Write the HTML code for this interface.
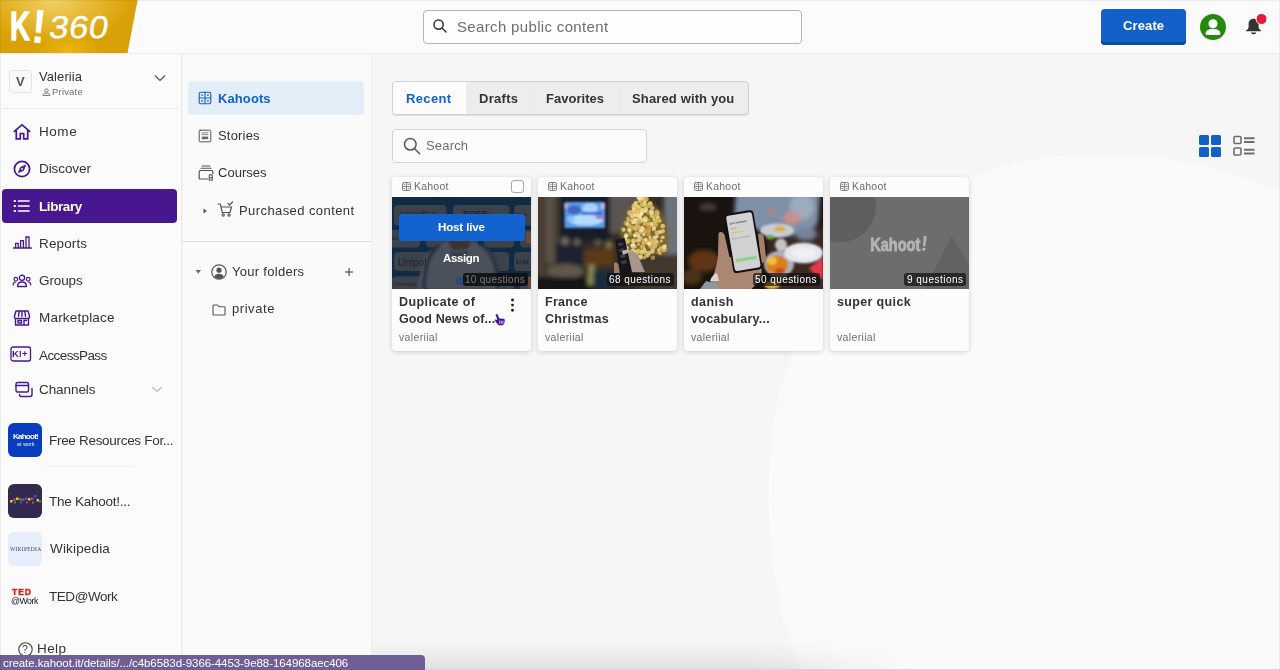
<!DOCTYPE html>
<html lang="en">
<head>
<meta charset="utf-8">
<title>Kahoot! Library</title>
<style>
*{box-sizing:border-box;margin:0;padding:0}
html,body{width:1280px;height:670px;overflow:hidden}
body{font-family:"Liberation Sans",Arial,sans-serif;background:#f6f6f6;color:#333;position:relative;font-size:13px}
.abs{position:absolute}
.z4{z-index:4}.z6{z-index:6}
.t{position:absolute;white-space:nowrap;z-index:4;will-change:transform}
#hdr{position:absolute;left:0;top:0;width:1280px;height:54px;background:#fbfbfb;border-bottom:1px solid #ebebeb;z-index:5}
#logo{position:absolute;left:0;top:0;width:138px;height:53px;z-index:6;background:radial-gradient(ellipse 34px 16px at 68px 50px,rgba(240,190,20,.75) 0%,rgba(240,190,20,0) 100%),radial-gradient(ellipse 78px 44px at 54px 0px,#f0d169 0%,#e8be3c 40%,#dca30a 95%,#d9a007 100%);clip-path:polygon(0 0,137.600px 0,127.500px 53px,0 53px)}
#logok{left:10px;top:6px;z-index:7;font-weight:bold;font-size:40px;color:#fff;transform:scaleX(.69);transform-origin:0 0;line-height:40px;-webkit-text-stroke:1.300px #fff}
#logox{left:30.500px;top:2.500px;z-index:7;font-weight:bold;font-size:48px;color:#fff;transform:scaleX(.9) rotate(6deg);transform-origin:50% 50%;line-height:48px}
#logon{left:47px;top:8.700px;z-index:7;font-size:31.500px;line-height:36px;color:#fff;letter-spacing:.4px;transform:skewX(-9deg) scaleX(1.100);transform-origin:0 100%;-webkit-text-stroke:.3px #fff}
#gsearch{position:absolute;left:423px;top:10px;width:379px;height:34px;border:1px solid #b4b4b4;border-radius:4px;background:#fdfdfd;z-index:6}
#create{position:absolute;left:1101px;top:9px;width:85px;height:35.500px;background:#1260c8;border-radius:4px;box-shadow:inset 0 -3px 0 #0c4aa0;z-index:6}
#sb{position:absolute;left:0;top:54px;width:182px;height:616px;background:#fbfbfb;border-right:1px solid #eaeaea;box-shadow:1px 0 0 #f4f4f4;z-index:3}
#sb2{position:absolute;left:182px;top:54px;width:190px;height:616px;background:#fafafa;border-right:1px solid #ededed;z-index:2}
.card{position:absolute;top:177px;width:138.600px;height:173.500px;background:#fcfcfc;border-radius:4px;box-shadow:0 1px 5px rgba(0,0,0,.17);z-index:1}
.img{position:absolute;top:197px;width:138.600px;height:92px;overflow:hidden;background:#666;z-index:1;will-change:transform}
#botgrad{position:absolute;left:372px;top:640px;width:540px;height:30px;z-index:0;background:linear-gradient(to bottom,rgba(0,0,0,0) 0%,rgba(0,0,0,.03) 45%,rgba(0,0,0,.085) 100%);-webkit-mask-image:linear-gradient(to right,#000 0%,#000 70%,transparent 100%);mask-image:linear-gradient(to right,#000 0%,#000 70%,transparent 100%)}
#botline{position:absolute;left:425px;top:669px;width:855px;height:1px;background:#d6d6d6;z-index:0}

</style>
</head>
<body>
<header>
<div id="hdr"></div>
<div id="logo"></div>
<span class="abs" id="logok">K</span><span class="abs" id="logox">!</span>
<span class="abs" id="logon">360</span>
<div id="gsearch"></div>
<svg class="abs z6" style="left:432px;top:18px" width="16" height="16" viewBox="0 0 16 16" fill="none" stroke="#333" stroke-width="1.5"><circle cx="6.6" cy="6.6" r="4.6"/><path d="M10 10l4 4" stroke-linecap="round"/></svg>
<span class="t" id="t0" style="left:457.33px;top:16.00px;font-size:15px;line-height:21px;font-weight:normal;color:#6e6e6e;letter-spacing:0.342px;z-index:6;">Search public content</span>
<div id="create"></div>
<span class="t" id="t1" style="left:1122.73px;top:16.90px;font-size:13px;line-height:18px;font-weight:bold;color:#fff;letter-spacing:0.120px;z-index:7;">Create</span>
<svg class="abs z6" style="left:1200px;top:13.700px" width="26" height="26" viewBox="0 0 26 26"><circle cx="13" cy="13" r="13" fill="#26890c"/><circle cx="13" cy="9.800" r="4.500" fill="#fff"/><path d="M5.6 19.6c0-3.4 3.3-4.6 7.4-4.6s7.4 1.2 7.4 4.6c0 .9-.5 1.4-1.4 1.4H7c-.9 0-1.4-.5-1.4-1.4z" fill="#fff"/></svg>
<svg class="abs z6" style="left:1243px;top:12px" width="26" height="26" viewBox="0 0 26 26"><path d="M10.600 6.800C7.500 6.800 5.600 9 5.600 12v3c0 1.500-1.100 2.500-2.400 3.400-.4.300-.2.900.3.900h14.200c.5 0 .7-.6.300-.9-1.300-.9-2.400-1.900-2.400-3.400v-3c0-3-1.900-5.200-5-5.200z" fill="#333"/><path d="M7.900 20.400h5.400c-.3 1.100-1.300 1.800-2.700 1.800s-2.400-.7-2.700-1.800z" fill="#333"/><circle cx="18.500" cy="7" r="5.500" fill="#e21b3c" stroke="#fbfbfb" stroke-width="1"/></svg>
</header>
<nav aria-label="Main navigation">
<div id="sb"></div><div id="sb2"></div>
<div class="abs" style="left:9px;top:70px;width:23px;height:23px;border:1px solid #e4e4e4;border-radius:4px;background:#fafafa;z-index:4"></div>
<span class="t" id="t2" style="left:15.80px;top:72.90px;font-size:13px;line-height:18px;font-weight:bold;color:#555;letter-spacing:0.000px;">V</span>
<span class="t" id="t3" style="left:39.20px;top:68.00px;font-size:13px;line-height:18px;font-weight:normal;color:#333;letter-spacing:0.086px;">Valeriia</span>
<svg class="abs z4" style="left:41.500px;top:87.500px" width="9" height="9" viewBox="0 0 9 9" fill="none" stroke="#6e6e6e" stroke-width=".9"><circle cx="4.500" cy="2.500" r="1.700"/><path d="M1 7.500c0-1.700 1.400-2.500 3.500-2.500s3.500.8 3.500 2.500z"/></svg>
<span class="t" id="t4" style="left:52.13px;top:85.00px;font-size:9.5px;line-height:13px;font-weight:normal;color:#6e6e6e;letter-spacing:0.189px;">Private</span>
<svg class="abs z4" style="left:153px;top:73px" width="14" height="10" viewBox="0 0 14 10" fill="none" stroke="#505050" stroke-width="1.150"><path d="M2 2.500l5 5 5-5"/></svg>
<div class="abs z4" style="left:2px;top:108px;width:176px;height:1px;background:#ebebeb"></div>
<div class="abs z4" style="left:2px;top:189px;width:175px;height:34px;background:#46178f;border-radius:4px"></div>
<svg class="abs" style="left:12px;top:121.6px;z-index:4" width="20" height="20" viewBox="0 0 20 20" fill="none" stroke="#46178f" stroke-width="1.5" stroke-linejoin="round" stroke-linecap="round"><path d="M2.300 9.300L10 2.800l7.700 6.500M4.300 8.300v8.500h4v-5.300h3.400v5.300h4V8.300" stroke-width="1.700" stroke-linejoin="miter"/></svg>
<span class="t" id="t5" style="left:38.70px;top:121.90px;font-size:13.5px;line-height:19px;font-weight:normal;color:#333;letter-spacing:0.556px;">Home</span>
<svg class="abs" style="left:12px;top:158.5px;z-index:4" width="20" height="20" viewBox="0 0 20 20" fill="none" stroke="#46178f" stroke-width="1.5" stroke-linejoin="round" stroke-linecap="round"><circle cx="10" cy="10" r="7.600" stroke-width="1.700"/><path d="M13.600 6.400l-2.100 5.100-5.100 2.100 2.100-5.100z" fill="#46178f" stroke-width=".8"/><circle cx="10" cy="10" r=".9" fill="#fcfcfc" stroke="none"/></svg>
<span class="t" id="t6" style="left:38.70px;top:159.20px;font-size:13.5px;line-height:19px;font-weight:normal;color:#333;letter-spacing:-0.081px;">Discover</span>
<svg class="abs" style="left:12px;top:196px;z-index:4" width="20" height="20" viewBox="0 0 20 20" fill="none" stroke="#fff" stroke-width="1.5" stroke-linejoin="round" stroke-linecap="round"><path d="M6.500 5h10.500M6.500 10h10.500M6.500 15h10.500" stroke-width="1.700"/><path d="M2.500 5h.6M2.500 10h.6M2.500 15h.6" stroke-width="1.900"/></svg>
<span class="t" id="t7" style="left:38.70px;top:196.50px;font-size:13.5px;line-height:19px;font-weight:bold;color:#fff;letter-spacing:-0.406px;">Library</span>
<svg class="abs" style="left:12px;top:232.2px;z-index:4" width="20" height="20" viewBox="0 0 20 20" fill="none" stroke="#46178f" stroke-width="1.5" stroke-linejoin="round" stroke-linecap="round"><path d="M1.500 16H19.300M3.600 16V11.400H6.200V16M8.600 16V8.600H11.400V16M14 16V5H17V16" stroke-width="1.300" stroke-linejoin="miter"/></svg>
<span class="t" id="t8" style="left:38.70px;top:234.10px;font-size:13.5px;line-height:19px;font-weight:normal;color:#333;letter-spacing:0.139px;">Reports</span>
<svg class="abs" style="left:12px;top:270.5px;z-index:4" width="20" height="20" viewBox="0 0 20 20" fill="none" stroke="#46178f" stroke-width="1.3" stroke-linejoin="round" stroke-linecap="round"><circle cx="10" cy="6.700" r="2.600"/><path d="M5.500 15.500c0-3 2-4.500 4.500-4.500s4.500 1.500 4.500 4.500z"/><circle cx="3.800" cy="8.200" r="1.800" stroke-width="1.200"/><circle cx="16.200" cy="8.200" r="1.800" stroke-width="1.200"/><path d="M1.200 14c0-1.800.9-3 2.600-3M18.800 14c0-1.800-.9-3-2.600-3" stroke-width="1.200"/></svg>
<span class="t" id="t9" style="left:39.03px;top:271.30px;font-size:13.5px;line-height:19px;font-weight:normal;color:#333;letter-spacing:-0.100px;">Groups</span>
<svg class="abs" style="left:12px;top:307.5px;z-index:4" width="20" height="20" viewBox="0 0 20 20" fill="none" stroke="#46178f" stroke-width="1.5" stroke-linejoin="round" stroke-linecap="round"><path d="M2.500 8l1.500-5h12l1.500 5v1.200c0 .8-.7 1.300-1.500 1.300H4c-.8 0-1.500-.5-1.500-1.300zM7.200 3.200l-.7 5M12.800 3.200l.7 5M10 3.200v5M3.500 10.500v6.500h13v-6.500M6 12.500h3.500v2.500H6zM12 17v-4.500h2.500" stroke-width="1.400"/></svg>
<span class="t" id="t10" style="left:38.70px;top:308.40px;font-size:13.5px;line-height:19px;font-weight:normal;color:#333;letter-spacing:0.200px;">Marketplace</span>
<svg class="abs" style="left:9.5px;top:346px;z-index:4" width="22" height="16" viewBox="0 0 22 16" fill="none" stroke="#46178f" stroke-width="1.5" stroke-linejoin="round" stroke-linecap="round"><rect x="1" y="1" width="19.500" height="14" rx="2" stroke-width="1.300"/></svg>
<span class="t" id="t11" style="left:12.33px;top:346.70px;font-size:9.5px;line-height:13px;font-weight:bold;color:#46178f;letter-spacing:0.000px;letter-spacing:0">K!+</span>
<span class="t" id="t12" style="left:39.00px;top:345.50px;font-size:13.5px;line-height:19px;font-weight:normal;color:#333;letter-spacing:-0.585px;">AccessPass</span>
<svg class="abs" style="left:13.7px;top:380px;z-index:4" width="20" height="18" viewBox="0 0 20 18" fill="none" stroke="#46178f" stroke-width="1.4" stroke-linejoin="round" stroke-linecap="round"><rect x="2" y="2.500" width="12.500" height="9.500" rx="1.500"/><path d="M2 5.500h12.500"/><path d="M5.500 14.500c0 1.500.7 2 2 2h8.500c1.300 0 2-.7 2-2V8.500" /></svg>
<span class="t" id="t13" style="left:39.03px;top:379.80px;font-size:13.5px;line-height:19px;font-weight:normal;color:#333;letter-spacing:-0.071px;">Channels</span>
<svg class="abs z4" style="left:150px;top:385px" width="14" height="9" viewBox="0 0 14 9" fill="none" stroke="#bdbdbd" stroke-width="1.200"><path d="M2 2l5 4.500 5-4.500"/></svg>
<div class="abs z4" style="left:8.200px;top:423px;width:34px;height:34px;border-radius:6px;background:#0a3cc0"></div>
<span class="t" id="t14" style="left:12.63px;top:431.00px;font-size:8px;line-height:11px;font-weight:bold;color:#fff;letter-spacing:-0.750px;z-index:5;">Kahoot!</span>
<span class="t" id="t15" style="left:16.67px;top:440.80px;font-size:5px;line-height:7px;font-weight:normal;color:#fff;letter-spacing:0.222px;z-index:5;">at work</span>
<span class="t" id="t16" style="left:49.00px;top:430.80px;font-size:13.5px;line-height:19px;font-weight:normal;color:#333;letter-spacing:-0.303px;">Free Resources For...</span>
<div class="abs z4" style="left:46px;top:466px;width:88px;height:1px;background:#f0f0f0"></div>
<div class="abs z4" style="left:8.200px;top:484px;width:34px;height:34px;border-radius:6px;background:#33284f"></div>
<svg class="abs" style="left:8.200px;top:484px;z-index:5" width="34" height="34" viewBox="0 0 34 34"><g>
<rect x="2" y="16" width="2.500" height="2.500" fill="#f0c030"/><rect x="5" y="14.500" width="2.500" height="2.500" fill="#e03050"/><rect x="8" y="13.500" width="2.500" height="2.500" fill="#f0c030"/><rect x="11" y="14" width="2.500" height="2.500" fill="#30a040"/><rect x="14" y="14.500" width="2.500" height="2.500" fill="#e03050"/><rect x="17" y="13.500" width="2.500" height="2.500" fill="#3060e0"/><rect x="20" y="14" width="2.500" height="2.500" fill="#f0c030"/><rect x="23" y="13.500" width="2.500" height="2.500" fill="#e03050"/><rect x="26" y="11" width="2.500" height="2.500" fill="#3060e0"/><rect x="28.500" y="15" width="2.500" height="2.500" fill="#f0c030"/><rect x="31" y="16.500" width="2" height="2" fill="#30a040"/>
<rect x="6" y="17.500" width="2" height="2" fill="#30a040"/><rect x="12" y="17.500" width="2" height="2" fill="#3060e0"/><rect x="18" y="17.500" width="2" height="2" fill="#e03050"/><rect x="24" y="17.500" width="2" height="2" fill="#30a040"/></g></svg>
<span class="t" id="t17" style="left:49.17px;top:491.50px;font-size:13.5px;line-height:19px;font-weight:normal;color:#333;letter-spacing:-0.256px;">The Kahoot!...</span>
<div class="abs z4" style="left:8.200px;top:531.500px;width:34px;height:34px;border-radius:6px;background:#e6eefa"></div>
<span class="t" id="t18" style="left:10.00px;top:544.60px;font-size:5.6px;line-height:8px;font-weight:normal;color:#3a4a66;letter-spacing:0.208px;font-family:'Liberation Serif',serif;z-index:5;">WIKIPEDIA</span>
<span class="t" id="t19" style="left:49.50px;top:539.30px;font-size:13.5px;line-height:19px;font-weight:normal;color:#333;letter-spacing:0.167px;">Wikipedia</span>
<span class="t" id="t20" style="left:11.50px;top:586.20px;font-size:8.5px;line-height:12px;font-weight:bold;color:#e2231a;letter-spacing:1.000px;-webkit-text-stroke:.4px #e2231a;">TED</span>
<span class="t" id="t21" style="left:10.83px;top:595.20px;font-size:8.8px;line-height:12px;font-weight:normal;color:#111;letter-spacing:0.000px;letter-spacing:-.5px">@Work</span>
<span class="t" id="t22" style="left:49.17px;top:586.70px;font-size:13.5px;line-height:19px;font-weight:normal;color:#333;letter-spacing:-0.452px;">TED@Work</span>
<svg class="abs z4" style="left:18px;top:641.500px" width="15" height="15" viewBox="0 0 15 15" fill="none" stroke="#444" stroke-width="1.100"><circle cx="7.500" cy="7.500" r="6.700"/></svg>
<span class="t" id="t23" style="left:22.47px;top:641.70px;font-size:10.5px;line-height:15px;font-weight:normal;color:#444;letter-spacing:0.000px;">?</span>
<span class="t" id="t24" style="left:36.80px;top:639.10px;font-size:13.5px;line-height:19px;font-weight:normal;color:#333;letter-spacing:0.389px;">Help</span>
</nav>
<aside aria-label="Library sections">
<div class="abs z4" style="left:188px;top:81px;width:176px;height:34px;background:#e4eef8;border-radius:4px"></div>
<svg class="abs" style="left:198px;top:91.3px;z-index:4" width="14" height="14" viewBox="0 0 14 14" fill="none" stroke="#1260c8" stroke-width="1.5" stroke-linejoin="round" stroke-linecap="round"><rect x="1.200" y="1.200" width="11.600" height="11.600" rx="1.500" stroke-width="1.100"/><path d="M7 1.200v11.600M1.200 7h11.600" stroke-width="1.100"/><path d="M3.600 4.100h1M9.400 4.100h1M3.600 9.900h1M9.400 9.900h1" stroke-width="1.200"/></svg>
<span class="t" id="t25" style="left:218.00px;top:90.10px;font-size:13px;line-height:18px;font-weight:bold;color:#1260c8;letter-spacing:0.100px;">Kahoots</span>
<svg class="abs" style="left:198px;top:128.5px;z-index:4" width="14" height="14" viewBox="0 0 14 14" fill="none" stroke="#555" stroke-width="1.5" stroke-linejoin="round" stroke-linecap="round"><rect x="1.200" y="1.200" width="11.600" height="11.600" rx="1" stroke-width="1"/><path d="M3.600 3.800h6.800M3.600 5.600h6.800" stroke-width=".7" stroke-linecap="butt"/><rect x="3.800" y="7.600" width="6.400" height="2.600" fill="#666" stroke="none"/></svg>
<span class="t" id="t26" style="left:218.33px;top:126.60px;font-size:13px;line-height:18px;font-weight:normal;color:#333;letter-spacing:0.189px;">Stories</span>
<svg class="abs" style="left:197.5px;top:164.5px;z-index:4" width="16" height="17" viewBox="0 0 16 17" fill="none" stroke="#555" stroke-width="1.5" stroke-linejoin="round" stroke-linecap="round"><path d="M4 1h8M3 3.200h10" stroke-width="1.100"/><path d="M10 14H2.200c-.6 0-1-.4-1-1V6.500c0-.6.4-1 1-1h11.600c.6 0 1 .4 1 1v2" stroke-width="1.200"/><circle cx="12.800" cy="11.300" r="1.700" stroke-width="1.100"/><path d="M11.300 12.500v3.200l1.500-1 1.500 1v-3.200" stroke-width="1"/></svg>
<span class="t" id="t27" style="left:218.33px;top:164.10px;font-size:13px;line-height:18px;font-weight:normal;color:#333;letter-spacing:0.033px;">Courses</span>
<svg class="abs z4" style="left:203px;top:207.500px" width="5" height="6" viewBox="0 0 5 6"><path d="M.5.500l3.500 2.500-3.500 2.500z" fill="#555"/></svg>
<svg class="abs" style="left:216.5px;top:201px;z-index:4" width="18" height="17" viewBox="0 0 18 17" fill="none" stroke="#555" stroke-width="1.5" stroke-linejoin="round" stroke-linecap="round"><path d="M1 3h2.300l2 8.500h7.700l1.500-5.500H4.200" stroke-width="1.200"/><circle cx="6.200" cy="14" r="1.100" stroke-width="1.100"/><circle cx="12" cy="14" r="1.100" stroke-width="1.100"/><path d="M11 2.500l1.500 1.500 3-3" stroke-width="1.200"/></svg>
<span class="t" id="t28" style="left:238.70px;top:201.60px;font-size:13px;line-height:18px;font-weight:normal;color:#333;letter-spacing:0.417px;">Purchased content</span>
<div class="abs z4" style="left:182px;top:241px;width:189px;height:1px;background:#dedede"></div>
<svg class="abs z4" style="left:195px;top:269px" width="7" height="6" viewBox="0 0 7 6"><path d="M.500 1h5.500L3.250 4.800z" fill="#6a6a6a"/></svg>
<svg class="abs z4" style="left:210.500px;top:263.500px" width="16" height="16" viewBox="0 0 16 16"><circle cx="8" cy="8" r="7.200" fill="none" stroke="#555" stroke-width="1.200"/><circle cx="8" cy="6.200" r="2.600" fill="#555"/><path d="M3.300 12.700c.6-2 2.400-2.900 4.700-2.900s4.100.9 4.700 2.900c-1.200 1.400-2.900 2.200-4.700 2.200s-3.500-.8-4.700-2.200z" fill="#555"/></svg>
<span class="t" id="t29" style="left:232.47px;top:263.00px;font-size:13px;line-height:18px;font-weight:normal;color:#333;letter-spacing:0.288px;">Your folders</span>
<svg class="abs z4" style="left:344.500px;top:267.500px" width="8" height="8" viewBox="0 0 8 8" stroke="#333" stroke-width="1"><path d="M4 0v8M0 4h8"/></svg>
<svg class="abs" style="left:211.5px;top:302.5px;z-index:4" width="14" height="13" viewBox="0 0 14 13" fill="none" stroke="#555" stroke-width="1.5" stroke-linejoin="round" stroke-linecap="round"><path d="M1 3c0-.6.400-1 1-1h3.500l1.500 1.700h5c.6 0 1 .4 1 1v6.300c0 .6-.4 1-1 1H2c-.6 0-1-.4-1-1z" stroke-width="1.100"/></svg>
<span class="t" id="t30" style="left:232.13px;top:300.00px;font-size:13px;line-height:18px;font-weight:normal;color:#333;letter-spacing:0.556px;">private</span>
</aside>
<main>
<svg id="wave" class="abs" style="left:372px;top:54px;z-index:0" width="908" height="616" viewBox="372 54 908 616"><path d="M802 670C774 610 760 520 774 420C792 305 882 205 990 170C1075 145 1185 150 1280 192V670z" fill="#fafafa"/></svg><div id="botgrad"></div><div id="botline"></div>
<div class="abs" style="left:392px;top:81px;width:357px;height:34px;border:1px solid #d2d2d2;border-radius:4px;background:#ededed;box-shadow:0 1px 0 #dedede"></div>
<div class="abs" style="left:393px;top:82px;width:73px;height:32px;background:#fcfcfc;border-radius:3px 0 0 3px"></div>
<div class="abs" style="left:533px;top:88px;width:1px;height:20px;background:#e6e6e6"></div>
<div class="abs" style="left:618.500px;top:88px;width:1px;height:20px;background:#e6e6e6"></div>
<span class="t" id="t31" style="left:406.30px;top:90.30px;font-size:13px;line-height:18px;font-weight:bold;color:#1260c8;letter-spacing:0.347px;">Recent</span>
<span class="t" id="t32" style="left:479.20px;top:90.30px;font-size:13px;line-height:18px;font-weight:bold;color:#333;letter-spacing:0.293px;">Drafts</span>
<span class="t" id="t33" style="left:546.00px;top:90.30px;font-size:13px;line-height:18px;font-weight:bold;color:#333;letter-spacing:0.025px;">Favorites</span>
<span class="t" id="t34" style="left:631.87px;top:90.30px;font-size:13px;line-height:18px;font-weight:bold;color:#333;letter-spacing:0.136px;">Shared with you</span>
<div class="abs" style="left:392px;top:129px;width:254.500px;height:34px;border:1px solid #d4d4d4;border-radius:4px;background:#fbfbfb"></div>
<svg class="abs" style="left:402px;top:136px" width="20" height="20" viewBox="0 0 20 20" fill="none" stroke="#555" stroke-width="1.500"><circle cx="8.300" cy="8.300" r="5.800"/><path d="M12.700 12.700l5 5" stroke-linecap="round"/></svg>
<span class="t" id="t35" style="left:426.13px;top:137.00px;font-size:13px;line-height:18px;font-weight:normal;color:#6e6e6e;letter-spacing:0.167px;">Search</span>
<svg class="abs" style="left:1199px;top:135px" width="22" height="22" viewBox="0 0 22 22" fill="#1260c8"><rect x="0" y="0" width="10" height="10" rx="1.500"/><rect x="12" y="0" width="10" height="10" rx="1.500"/><rect x="0" y="12" width="10" height="10" rx="1.500"/><rect x="12" y="12" width="10" height="10" rx="1.500"/></svg>
<svg class="abs" style="left:1233px;top:135px" width="22" height="22" viewBox="0 0 22 22" fill="none" stroke="#6e6e6e" stroke-width="1.600"><rect x="1" y="1.500" width="7" height="7" rx="1"/><rect x="1" y="13" width="7" height="7" rx="1"/><path d="M11 3.300h10.500M11 6.900h10.500M11 14.800h10.500M11 18.400h10.500" stroke-width="2"/></svg>
<div class="card" style="left:392px"></div>
<svg class="abs" style="left:401.5px;top:182px;z-index:4" width="9" height="9" viewBox="0 0 9 9" fill="none" stroke="#6e6e6e" stroke-width="1.5" stroke-linejoin="round" stroke-linecap="round"><rect x=".6" y=".6" width="7.800" height="7.800" rx="1" stroke-width=".9"/><path d="M4.500.6v7.800M.6 4.500h7.800" stroke-width=".8"/><path d="M2.100 2.600h.9M6 2.600h.9M2.100 6.400h.9M6 6.400h.9" stroke-width=".8"/></svg>
<span class="t" id="t36" style="left:413.63px;top:178.90px;font-size:10.5px;line-height:15px;font-weight:normal;color:#6e6e6e;letter-spacing:0.220px;">Kahoot</span>
<div class="img" id="img0" style="left:392px"><svg width="139" height="92" viewBox="0 0 139 92" style="display:block" preserveAspectRatio="none"><defs><filter id="b1" x="-10%" y="-10%" width="120%" height="120%"><feGaussianBlur stdDeviation="0.800"/></filter></defs><rect width="139" height="92" fill="#122b45"/><rect x="2" y="8" width="52.5" height="20.5" rx="4" fill="#3c424c"/><rect x="61" y="8" width="56.5" height="20.5" rx="4" fill="#3c424c"/><rect x="122" y="8" width="20" height="20.5" rx="4" fill="#3c424c"/><rect x="-6" y="33" width="34" height="17.5" rx="4" fill="#3c424c"/><rect x="34" y="33" width="52" height="17.5" rx="4" fill="#3c424c"/><rect x="92" y="33" width="30" height="17.5" rx="4" fill="#3c424c"/><rect x="128" y="33" width="14" height="17.5" rx="4" fill="#3c424c"/><rect x="2" y="55" width="36" height="19" rx="4" fill="#3c424c"/><rect x="61" y="55" width="56" height="19" rx="4" fill="#3c424c"/><rect x="122" y="55" width="20" height="19" rx="4" fill="#3c424c"/><rect x="0" y="79.5" width="32" height="14" rx="4" fill="#3c424c"/><rect x="36" y="79.5" width="50" height="14" rx="4" fill="#3c424c"/><rect x="92" y="79.5" width="30" height="14" rx="4" fill="#3c424c"/><rect x="128" y="79.5" width="14" height="14" rx="4" fill="#3c424c"/><g filter="url(#b1)"><path d="M52 46c8-3 22-3 31 0l14 8c6 4 10 18 12 38H26c2-20 6-34 12-38z" fill="#4b515a"/><path d="M32 92c0-22 6-38 16-44M106 92c0-22-6-38-16-44" fill="none" stroke="#2b3442" stroke-width="4"/><ellipse cx="67.500" cy="46" rx="11" ry="7.500" fill="#3a3230"/><path d="M58 52c4 5 15 5 19 0l-3 8H61z" fill="#2d3a4c"/></g><text x="8" y="19.500" font-size="8.500" font-family="Liberation Sans,Arial,sans-serif" fill="#20242e">UnipolSai</text><text x="71" y="19.500" font-size="9" font-weight="bold" font-family="Liberation Sans,Arial,sans-serif" fill="#20242e">BPER:</text><text x="124.500" y="19.500" font-size="5" font-family="Liberation Sans,Arial,sans-serif" fill="#20242e">EUR</text><text x="6" y="69" font-size="10" font-family="Liberation Sans,Arial,sans-serif" fill="#20242e">Unipol</text><text x="124" y="67" font-size="6" font-weight="bold" font-family="Liberation Sans,Arial,sans-serif" fill="#20242e">EUR</text><text x="1" y="89" font-size="5.500" font-family="Liberation Sans,Arial,sans-serif" fill="#20242e">Grenston</text><text x="0" y="43" font-size="5" font-family="Liberation Sans,Arial,sans-serif" fill="#20242e">bo</text><rect x="64" y="80" width="8" height="8" fill="#2c4a78"/><rect x="134" y="35" width="5" height="11" fill="#6a4a3a"/><rect x="136" y="80" width="3" height="12" fill="#6a4a3a"/></svg></div>
<span class="t" id="t37" style="left:398.73px;top:292.80px;font-size:12.5px;line-height:18px;font-weight:bold;color:#333;letter-spacing:0.409px;">Duplicate of</span>
<span class="t" id="t38" style="left:398.87px;top:309.60px;font-size:12.5px;line-height:18px;font-weight:bold;color:#333;letter-spacing:0.119px;">Good News of...</span>
<span class="t" id="t39" style="left:399.20px;top:329.90px;font-size:10.5px;line-height:15px;font-weight:normal;color:#6e6e6e;letter-spacing:0.342px;">valeriial</span>
<div class="abs" style="left:462.5px;top:273px;width:65.0px;height:13px;border-radius:3px;background:rgba(14,14,14,0.9);z-index:2"></div>
<span class="t" id="t40" style="left:465.03px;top:272.60px;font-size:10px;line-height:14px;font-weight:normal;color:#787c83;letter-spacing:0.279px;z-index:3;">10 questions</span>
<div class="card" style="left:538px"></div>
<svg class="abs" style="left:547.5px;top:182px;z-index:4" width="9" height="9" viewBox="0 0 9 9" fill="none" stroke="#6e6e6e" stroke-width="1.5" stroke-linejoin="round" stroke-linecap="round"><rect x=".6" y=".6" width="7.800" height="7.800" rx="1" stroke-width=".9"/><path d="M4.500.6v7.800M.6 4.500h7.800" stroke-width=".8"/><path d="M2.100 2.600h.9M6 2.600h.9M2.100 6.400h.9M6 6.400h.9" stroke-width=".8"/></svg>
<span class="t" id="t41" style="left:559.63px;top:178.90px;font-size:10.5px;line-height:15px;font-weight:normal;color:#6e6e6e;letter-spacing:0.220px;">Kahoot</span>
<div class="img" id="img1" style="left:538px"><svg width="139" height="92" viewBox="0 0 139 92" style="display:block" preserveAspectRatio="none"><defs><filter id="b2" x="-10%" y="-10%" width="120%" height="120%"><feGaussianBlur stdDeviation="2.200"/></filter><filter id="b2s" x="-10%" y="-10%" width="120%" height="120%"><feGaussianBlur stdDeviation="0.700"/></filter><filter id="b2t" x="-20%" y="-20%" width="140%" height="140%"><feGaussianBlur stdDeviation="2"/></filter><filter id="b2m" x="-10%" y="-10%" width="120%" height="120%"><feGaussianBlur stdDeviation="1.100"/></filter><filter id="b2c" x="-10%" y="-10%" width="120%" height="120%"><feGaussianBlur stdDeviation="0.450"/></filter><filter id="b2h" x="-10%" y="-10%" width="120%" height="120%"><feGaussianBlur stdDeviation="0.500"/></filter></defs><rect width="139" height="92" fill="#332c26"/><g filter="url(#b2)"><rect x="-4" y="-4" width="25" height="100" fill="#463d33"/><rect x="8" y="-4" width="8" height="70" fill="#5a5146"/><rect x="72" y="-4" width="30" height="40" fill="#5a5552"/><rect x="126" y="-4" width="18" height="62" fill="#6d737c"/><rect x="22" y="-4" width="50" height="48" fill="#171e2c"/><rect x="18" y="47" width="30" height="22" fill="#1c222e"/><rect x="46" y="52" width="30" height="17" fill="#5a3a12"/><ellipse cx="28" cy="74" rx="18" ry="7" fill="#5e594c"/><rect x="-4" y="80" width="60" height="16" fill="#191513"/><rect x="98" y="60" width="45" height="36" fill="#43382f"/><rect x="50" y="68" width="7" height="20" fill="#8c8c52"/><rect x="55" y="74" width="22" height="22" fill="#1b2a40"/><circle cx="27" cy="44" r="3.500" fill="#7a7468"/><circle cx="39" cy="45" r="3" fill="#6e6a66"/><circle cx="60" cy="46" r="3" fill="#6a6250"/><circle cx="71" cy="48" r="3.500" fill="#8a7a4a"/></g><g filter="url(#b2m)"><rect x="26.500" y="5" width="40.500" height="26" rx="1.500" fill="#5a9ce6"/><ellipse cx="48" cy="23" rx="17" ry="5.500" fill="#b4dcff"/><ellipse cx="52" cy="11" rx="8" ry="5" fill="#a8d2fb"/><ellipse cx="36" cy="13" rx="7" ry="4.500" fill="#3f66c4"/><rect x="44" y="15" width="20" height="3" fill="#3a6ad0"/><ellipse cx="33" cy="22" rx="4" ry="3" fill="#8fc0f4"/><rect x="58" y="19" width="9" height="3" fill="#b070c0"/><ellipse cx="28" cy="9" rx="2" ry="3" fill="#c8a0c8"/><ellipse cx="65" cy="9" rx="2" ry="3" fill="#d8b8d0"/></g><g filter="url(#b2t)"><path d="M104 -2L124 16 131 38 128 58H92L82 36 90 14z" fill="#7d6830"/></g><g filter="url(#b2c)"><circle cx="94.4" cy="19.1" r="2.2" fill="#f3e09a" opacity="0.89"/><circle cx="105.9" cy="4.8" r="2.4" fill="#d6b254" opacity="0.61"/><circle cx="89.6" cy="25.9" r="1.6" fill="#ecd488" opacity="0.62"/><circle cx="124.9" cy="34.1" r="2.1" fill="#e9cf7c" opacity="0.80"/><circle cx="122.3" cy="23.6" r="1.5" fill="#dcbc60" opacity="0.70"/><circle cx="97.6" cy="7.9" r="1.8" fill="#dcbc60" opacity="0.64"/><circle cx="91.9" cy="34.4" r="1.6" fill="#f3e09a" opacity="0.80"/><circle cx="105.7" cy="37.4" r="2.0" fill="#e3c56c" opacity="0.76"/><circle cx="103.7" cy="56.3" r="1.7" fill="#dcbc60" opacity="0.84"/><circle cx="107.6" cy="14.1" r="2.0" fill="#e3c56c" opacity="0.86"/><circle cx="120.0" cy="16.9" r="1.6" fill="#ecd488" opacity="0.66"/><circle cx="119.7" cy="20.2" r="1.9" fill="#f3e09a" opacity="0.87"/><circle cx="121.9" cy="34.5" r="1.8" fill="#e3c56c" opacity="0.81"/><circle cx="103.6" cy="35.0" r="2.3" fill="#fbefba" opacity="0.77"/><circle cx="87.6" cy="40.2" r="2.2" fill="#caa548" opacity="0.70"/><circle cx="111.4" cy="22.9" r="1.5" fill="#caa548" opacity="0.72"/><circle cx="105.5" cy="36.9" r="1.7" fill="#fbefba" opacity="0.65"/><circle cx="102.4" cy="14.4" r="2.4" fill="#f3e09a" opacity="0.66"/><circle cx="97.6" cy="23.9" r="1.6" fill="#ecd488" opacity="0.90"/><circle cx="103.0" cy="16.3" r="1.9" fill="#ecd488" opacity="0.94"/><circle cx="98.5" cy="8.4" r="1.7" fill="#d6b254" opacity="0.60"/><circle cx="95.3" cy="50.5" r="1.8" fill="#dcbc60" opacity="0.75"/><circle cx="107.8" cy="21.9" r="2.5" fill="#e9cf7c" opacity="0.76"/><circle cx="125.6" cy="53.0" r="2.2" fill="#ecd488" opacity="0.74"/><circle cx="104.8" cy="23.4" r="1.9" fill="#d6b254" opacity="0.62"/><circle cx="96.9" cy="11.9" r="1.8" fill="#e9cf7c" opacity="0.64"/><circle cx="107.1" cy="34.1" r="2.4" fill="#e9cf7c" opacity="0.62"/><circle cx="102.2" cy="11.9" r="2.1" fill="#e3c56c" opacity="0.81"/><circle cx="90.5" cy="28.4" r="2.0" fill="#caa548" opacity="0.77"/><circle cx="94.4" cy="18.3" r="2.2" fill="#fbefba" opacity="0.77"/><circle cx="107.2" cy="41.9" r="1.7" fill="#e3c56c" opacity="0.65"/><circle cx="85.5" cy="32.7" r="2.0" fill="#f3e09a" opacity="0.84"/><circle cx="101.6" cy="15.2" r="1.7" fill="#d6b254" opacity="0.79"/><circle cx="100.5" cy="47.3" r="1.7" fill="#d6b254" opacity="0.88"/><circle cx="117.2" cy="49.7" r="1.7" fill="#caa548" opacity="0.72"/><circle cx="100.0" cy="0.8" r="1.8" fill="#fbefba" opacity="0.67"/><circle cx="98.9" cy="36.5" r="2.3" fill="#e3c56c" opacity="0.93"/><circle cx="96.1" cy="21.6" r="1.7" fill="#d6b254" opacity="0.72"/><circle cx="124.6" cy="28.9" r="2.1" fill="#e9cf7c" opacity="0.77"/><circle cx="119.0" cy="39.5" r="1.6" fill="#f3e09a" opacity="0.92"/><circle cx="117.4" cy="47.5" r="2.0" fill="#dcbc60" opacity="0.75"/><circle cx="88.3" cy="38.4" r="2.4" fill="#ecd488" opacity="0.76"/><circle cx="90.0" cy="45.1" r="1.7" fill="#dcbc60" opacity="0.61"/><circle cx="104.1" cy="35.6" r="2.2" fill="#caa548" opacity="0.83"/><circle cx="107.1" cy="20.7" r="1.6" fill="#e9cf7c" opacity="0.88"/><circle cx="90.5" cy="44.0" r="2.2" fill="#dcbc60" opacity="0.75"/><circle cx="120.8" cy="53.0" r="1.7" fill="#fbefba" opacity="0.67"/><circle cx="116.1" cy="30.1" r="1.8" fill="#ecd488" opacity="0.89"/><circle cx="107.3" cy="2.8" r="2.4" fill="#ecd488" opacity="0.89"/><circle cx="94.1" cy="53.4" r="1.7" fill="#e9cf7c" opacity="0.91"/><circle cx="111.7" cy="47.1" r="2.3" fill="#dcbc60" opacity="0.66"/><circle cx="114.3" cy="28.4" r="2.1" fill="#e3c56c" opacity="0.84"/><circle cx="104.8" cy="31.9" r="2.3" fill="#e9cf7c" opacity="0.69"/><circle cx="113.6" cy="16.2" r="2.0" fill="#e9cf7c" opacity="0.87"/><circle cx="106.5" cy="55.6" r="2.1" fill="#d6b254" opacity="0.84"/><circle cx="106.8" cy="27.0" r="2.0" fill="#d6b254" opacity="0.84"/><circle cx="125.3" cy="53.3" r="1.8" fill="#d6b254" opacity="0.89"/><circle cx="97.8" cy="7.5" r="1.9" fill="#f3e09a" opacity="0.83"/><circle cx="94.9" cy="25.6" r="1.8" fill="#f3e09a" opacity="0.91"/><circle cx="109.4" cy="8.6" r="2.2" fill="#dcbc60" opacity="0.69"/><circle cx="104.3" cy="7.5" r="2.2" fill="#f3e09a" opacity="0.74"/><circle cx="124.9" cy="29.2" r="2.3" fill="#dcbc60" opacity="0.85"/><circle cx="106.4" cy="60.6" r="1.9" fill="#e3c56c" opacity="0.71"/><circle cx="86.9" cy="43.8" r="2.1" fill="#caa548" opacity="0.85"/><circle cx="106.1" cy="22.8" r="1.8" fill="#f3e09a" opacity="0.64"/><circle cx="98.8" cy="55.9" r="2.4" fill="#f3e09a" opacity="0.69"/><circle cx="107.1" cy="1.5" r="1.8" fill="#dcbc60" opacity="0.89"/><circle cx="114.9" cy="51.7" r="2.4" fill="#ecd488" opacity="0.65"/><circle cx="111.1" cy="56.0" r="2.2" fill="#f3e09a" opacity="0.70"/><circle cx="94.9" cy="48.6" r="2.4" fill="#fbefba" opacity="0.93"/><circle cx="119.0" cy="38.3" r="1.6" fill="#d6b254" opacity="0.62"/><circle cx="106.3" cy="52.5" r="1.8" fill="#ecd488" opacity="0.92"/><circle cx="94.7" cy="15.6" r="2.0" fill="#d6b254" opacity="0.93"/><circle cx="101.8" cy="59.1" r="1.7" fill="#fbefba" opacity="0.82"/><circle cx="93.2" cy="31.9" r="1.9" fill="#dcbc60" opacity="0.69"/><circle cx="127.3" cy="48.8" r="1.5" fill="#e9cf7c" opacity="0.86"/><circle cx="92.3" cy="33.2" r="2.0" fill="#caa548" opacity="0.64"/><circle cx="105.0" cy="49.8" r="2.0" fill="#ecd488" opacity="0.94"/><circle cx="96.6" cy="18.1" r="1.7" fill="#d6b254" opacity="0.89"/><circle cx="112.3" cy="42.8" r="1.9" fill="#e3c56c" opacity="0.94"/><circle cx="88.8" cy="50.9" r="2.1" fill="#fbefba" opacity="0.75"/><circle cx="106.3" cy="2.4" r="1.9" fill="#fbefba" opacity="0.81"/><circle cx="87.5" cy="41.9" r="1.7" fill="#fbefba" opacity="0.76"/><circle cx="118.9" cy="15.3" r="2.5" fill="#e3c56c" opacity="0.69"/><circle cx="103.1" cy="58.9" r="1.9" fill="#e9cf7c" opacity="0.72"/><circle cx="101.5" cy="4.2" r="2.2" fill="#d6b254" opacity="0.78"/><circle cx="102.5" cy="-0.7" r="1.6" fill="#ecd488" opacity="0.81"/><circle cx="98.5" cy="23.4" r="2.1" fill="#f3e09a" opacity="0.80"/><circle cx="115.9" cy="31.8" r="2.2" fill="#ecd488" opacity="0.87"/><circle cx="106.6" cy="43.7" r="1.8" fill="#dcbc60" opacity="0.62"/><circle cx="123.3" cy="50.8" r="2.1" fill="#dcbc60" opacity="0.92"/><circle cx="109.9" cy="45.7" r="2.3" fill="#e9cf7c" opacity="0.89"/><circle cx="122.8" cy="35.2" r="2.2" fill="#d6b254" opacity="0.63"/><circle cx="105.7" cy="1.6" r="2.5" fill="#ecd488" opacity="0.89"/><circle cx="111.0" cy="33.6" r="2.1" fill="#d6b254" opacity="0.77"/><circle cx="106.1" cy="-0.8" r="2.2" fill="#f3e09a" opacity="0.83"/><circle cx="107.4" cy="3.1" r="1.8" fill="#f3e09a" opacity="0.90"/><circle cx="112.5" cy="13.6" r="1.7" fill="#caa548" opacity="0.77"/><circle cx="104.8" cy="22.7" r="2.2" fill="#e9cf7c" opacity="0.82"/><circle cx="88.0" cy="38.9" r="1.6" fill="#fbefba" opacity="0.83"/><circle cx="111.6" cy="42.0" r="1.6" fill="#caa548" opacity="0.62"/><circle cx="110.5" cy="15.7" r="2.2" fill="#caa548" opacity="0.70"/><circle cx="104.1" cy="31.0" r="2.0" fill="#f3e09a" opacity="0.95"/><circle cx="97.5" cy="33.0" r="1.6" fill="#caa548" opacity="0.61"/><circle cx="117.7" cy="27.5" r="2.5" fill="#caa548" opacity="0.95"/><circle cx="120.0" cy="23.0" r="2.4" fill="#f3e09a" opacity="0.80"/><circle cx="105.4" cy="7.8" r="2.5" fill="#dcbc60" opacity="0.81"/><circle cx="96.5" cy="38.2" r="1.6" fill="#e3c56c" opacity="0.68"/><circle cx="107.9" cy="54.7" r="1.5" fill="#e9cf7c" opacity="0.93"/><circle cx="102.5" cy="41.3" r="2.2" fill="#ecd488" opacity="0.72"/><circle cx="116.2" cy="18.6" r="1.5" fill="#e3c56c" opacity="0.89"/><circle cx="112.1" cy="6.4" r="2.2" fill="#fbefba" opacity="0.69"/><circle cx="103.1" cy="3.0" r="2.4" fill="#f3e09a" opacity="0.73"/><circle cx="97.2" cy="25.5" r="1.5" fill="#f3e09a" opacity="0.62"/><circle cx="112.0" cy="40.0" r="1.6" fill="#fbefba" opacity="0.75"/><circle cx="114.1" cy="18.6" r="2.3" fill="#ecd488" opacity="0.91"/><circle cx="112.8" cy="49.3" r="2.4" fill="#d6b254" opacity="0.85"/><circle cx="106.9" cy="2.1" r="2.0" fill="#dcbc60" opacity="0.83"/><circle cx="91.9" cy="16.7" r="2.4" fill="#dcbc60" opacity="0.66"/><circle cx="97.6" cy="24.7" r="1.8" fill="#fbefba" opacity="0.74"/><circle cx="105.0" cy="13.8" r="2.2" fill="#f3e09a" opacity="0.66"/><circle cx="98.9" cy="9.0" r="2.4" fill="#caa548" opacity="0.79"/><circle cx="99.2" cy="27.1" r="2.3" fill="#ecd488" opacity="0.65"/><circle cx="95.6" cy="10.9" r="1.8" fill="#f3e09a" opacity="0.71"/><circle cx="116.0" cy="21.8" r="1.7" fill="#e9cf7c" opacity="0.86"/><circle cx="102.4" cy="24.6" r="2.0" fill="#ecd488" opacity="0.69"/><circle cx="107.0" cy="45.6" r="2.1" fill="#e3c56c" opacity="0.64"/><circle cx="110.7" cy="30.2" r="2.4" fill="#d6b254" opacity="0.63"/><circle cx="104.0" cy="54.6" r="2.1" fill="#ecd488" opacity="0.93"/><circle cx="122.5" cy="51.6" r="1.5" fill="#e9cf7c" opacity="0.75"/><circle cx="119.6" cy="46.3" r="2.5" fill="#caa548" opacity="0.60"/><circle cx="120.5" cy="23.3" r="2.3" fill="#caa548" opacity="0.94"/><circle cx="94.4" cy="14.4" r="1.7" fill="#f3e09a" opacity="0.93"/><circle cx="112.9" cy="43.7" r="2.3" fill="#caa548" opacity="0.63"/><circle cx="87.2" cy="47.2" r="1.6" fill="#e9cf7c" opacity="0.83"/><circle cx="94.0" cy="17.8" r="1.8" fill="#ecd488" opacity="0.84"/><circle cx="97.7" cy="6.0" r="2.0" fill="#d6b254" opacity="0.74"/><circle cx="108.1" cy="12.9" r="1.5" fill="#fbefba" opacity="0.95"/><circle cx="100.0" cy="16.3" r="2.3" fill="#d6b254" opacity="0.77"/><circle cx="98.5" cy="13.6" r="2.5" fill="#fbefba" opacity="0.62"/><circle cx="114.4" cy="11.0" r="2.1" fill="#f3e09a" opacity="0.69"/><circle cx="124.3" cy="40.4" r="1.7" fill="#e9cf7c" opacity="0.84"/><circle cx="101.1" cy="43.5" r="1.9" fill="#e9cf7c" opacity="0.88"/><circle cx="107.2" cy="44.8" r="1.7" fill="#d6b254" opacity="0.71"/><circle cx="97.1" cy="49.8" r="1.7" fill="#fbefba" opacity="0.64"/><circle cx="110.7" cy="37.7" r="2.4" fill="#caa548" opacity="0.75"/><circle cx="125.3" cy="40.2" r="1.6" fill="#ecd488" opacity="0.62"/><circle cx="105.1" cy="0.5" r="1.9" fill="#e9cf7c" opacity="0.66"/><circle cx="113.5" cy="26.9" r="1.8" fill="#f3e09a" opacity="0.95"/><circle cx="102.8" cy="56.8" r="1.7" fill="#caa548" opacity="0.61"/><circle cx="101.1" cy="40.2" r="1.9" fill="#e3c56c" opacity="0.75"/><circle cx="97.9" cy="5.8" r="1.6" fill="#ecd488" opacity="0.93"/><circle cx="112.9" cy="6.7" r="1.7" fill="#e3c56c" opacity="0.87"/><circle cx="115.0" cy="18.1" r="1.6" fill="#caa548" opacity="0.67"/><circle cx="103.2" cy="32.6" r="1.8" fill="#caa548" opacity="0.61"/><circle cx="116.7" cy="24.5" r="2.3" fill="#e9cf7c" opacity="0.73"/><circle cx="117.2" cy="27.8" r="1.6" fill="#d6b254" opacity="0.86"/><circle cx="102.3" cy="54.7" r="1.8" fill="#e9cf7c" opacity="0.69"/><circle cx="99.2" cy="43.4" r="1.8" fill="#e9cf7c" opacity="0.85"/><circle cx="119.0" cy="35.9" r="2.4" fill="#f3e09a" opacity="0.61"/><circle cx="104.8" cy="13.5" r="2.5" fill="#ecd488" opacity="0.88"/><circle cx="120.1" cy="55.6" r="1.6" fill="#caa548" opacity="0.66"/><circle cx="117.1" cy="48.8" r="2.3" fill="#dcbc60" opacity="0.81"/><circle cx="99.7" cy="19.3" r="1.9" fill="#f3e09a" opacity="0.78"/><circle cx="93.6" cy="23.3" r="1.9" fill="#e9cf7c" opacity="0.77"/><circle cx="91.1" cy="32.8" r="1.9" fill="#f3e09a" opacity="0.95"/><circle cx="93.4" cy="15.4" r="1.6" fill="#caa548" opacity="0.95"/><circle cx="99.4" cy="59.3" r="1.6" fill="#caa548" opacity="0.82"/><circle cx="116.8" cy="40.8" r="2.3" fill="#f3e09a" opacity="0.87"/><circle cx="98.8" cy="17.2" r="1.8" fill="#fbefba" opacity="0.86"/><circle cx="99.1" cy="11.3" r="1.7" fill="#dcbc60" opacity="0.70"/><circle cx="96.9" cy="55.3" r="1.6" fill="#fbefba" opacity="0.95"/><circle cx="94.6" cy="30.5" r="2.3" fill="#caa548" opacity="0.95"/><circle cx="104.3" cy="5.3" r="2.3" fill="#caa548" opacity="0.92"/><circle cx="102.3" cy="1.5" r="1.6" fill="#d6b254" opacity="0.81"/><circle cx="95.7" cy="50.3" r="1.6" fill="#dcbc60" opacity="0.76"/><circle cx="113.5" cy="15.1" r="2.4" fill="#f3e09a" opacity="0.82"/><circle cx="100.4" cy="43.0" r="1.5" fill="#e3c56c" opacity="0.65"/><circle cx="99.2" cy="11.6" r="2.1" fill="#d6b254" opacity="0.89"/><circle cx="104.1" cy="49.8" r="1.9" fill="#fbefba" opacity="0.63"/><circle cx="104.2" cy="1.0" r="2.0" fill="#ecd488" opacity="0.64"/><circle cx="107.3" cy="23.5" r="2.1" fill="#f3e09a" opacity="0.83"/><circle cx="97.4" cy="23.7" r="2.5" fill="#fbefba" opacity="0.75"/><circle cx="107.1" cy="2.2" r="2.4" fill="#ecd488" opacity="0.75"/><circle cx="127.4" cy="52.6" r="1.9" fill="#d6b254" opacity="0.74"/><circle cx="121.3" cy="24.1" r="1.9" fill="#dcbc60" opacity="0.75"/><circle cx="104.0" cy="49.9" r="2.4" fill="#caa548" opacity="0.87"/><circle cx="96.8" cy="7.1" r="1.6" fill="#ecd488" opacity="0.63"/><circle cx="100.3" cy="37.6" r="2.0" fill="#dcbc60" opacity="0.72"/><circle cx="98.2" cy="9.0" r="1.6" fill="#ecd488" opacity="0.77"/><circle cx="126.2" cy="48.9" r="1.7" fill="#dcbc60" opacity="0.89"/><circle cx="108.6" cy="1.7" r="1.8" fill="#ecd488" opacity="0.63"/><circle cx="114.5" cy="43.2" r="2.4" fill="#d6b254" opacity="0.82"/><circle cx="92.6" cy="37.1" r="2.0" fill="#d6b254" opacity="0.61"/><circle cx="97.2" cy="57.2" r="1.9" fill="#dcbc60" opacity="0.69"/><circle cx="123.3" cy="43.9" r="1.5" fill="#e9cf7c" opacity="0.83"/><circle cx="102.0" cy="19.1" r="2.0" fill="#fbefba" opacity="0.83"/><circle cx="97.7" cy="18.1" r="1.9" fill="#e3c56c" opacity="0.76"/><circle cx="87.7" cy="26.2" r="2.1" fill="#caa548" opacity="0.76"/><circle cx="110.0" cy="26.7" r="2.3" fill="#dcbc60" opacity="0.88"/><circle cx="90.1" cy="23.8" r="1.9" fill="#e3c56c" opacity="0.63"/><circle cx="105.9" cy="26.4" r="1.5" fill="#dcbc60" opacity="0.63"/><circle cx="118.3" cy="44.5" r="2.0" fill="#e9cf7c" opacity="0.86"/><circle cx="114.3" cy="54.5" r="2.3" fill="#e9cf7c" opacity="0.90"/><circle cx="114.9" cy="60.8" r="2.3" fill="#d6b254" opacity="0.65"/><circle cx="100.2" cy="53.9" r="2.3" fill="#dcbc60" opacity="0.84"/><circle cx="95.3" cy="43.7" r="2.3" fill="#fbefba" opacity="0.66"/><circle cx="99.9" cy="54.6" r="2.3" fill="#dcbc60" opacity="0.69"/><circle cx="108.2" cy="58.8" r="2.1" fill="#d6b254" opacity="0.71"/><circle cx="101.2" cy="1.3" r="1.7" fill="#fbefba" opacity="0.84"/><circle cx="95.8" cy="54.5" r="2.3" fill="#f3e09a" opacity="0.87"/><circle cx="108.2" cy="2.0" r="2.5" fill="#caa548" opacity="0.79"/><circle cx="122.3" cy="35.0" r="1.6" fill="#ecd488" opacity="0.86"/><circle cx="101.3" cy="22.0" r="1.9" fill="#dcbc60" opacity="0.73"/><circle cx="104.9" cy="46.4" r="1.7" fill="#e9cf7c" opacity="0.70"/><circle cx="97.7" cy="31.0" r="2.5" fill="#e3c56c" opacity="0.86"/><circle cx="95.7" cy="45.3" r="1.8" fill="#ecd488" opacity="0.75"/><circle cx="90.2" cy="21.6" r="2.0" fill="#e9cf7c" opacity="0.61"/><circle cx="103.1" cy="-0.8" r="1.6" fill="#e3c56c" opacity="0.79"/><circle cx="98.3" cy="24.6" r="1.6" fill="#e3c56c" opacity="0.82"/><circle cx="91.3" cy="28.4" r="2.4" fill="#d6b254" opacity="0.85"/><circle cx="89.0" cy="27.0" r="1.6" fill="#fbefba" opacity="0.74"/><circle cx="91.3" cy="15.4" r="2.1" fill="#e3c56c" opacity="0.81"/><circle cx="110.0" cy="34.9" r="2.0" fill="#caa548" opacity="0.69"/><circle cx="91.2" cy="55.0" r="2.0" fill="#ecd488" opacity="0.66"/><circle cx="113.5" cy="8.9" r="1.6" fill="#d6b254" opacity="0.65"/><circle cx="107.9" cy="11.4" r="2.0" fill="#ecd488" opacity="0.88"/><circle cx="100.9" cy="9.8" r="1.8" fill="#e9cf7c" opacity="0.95"/><circle cx="105.9" cy="43.9" r="2.0" fill="#ecd488" opacity="0.90"/><circle cx="105.6" cy="45.2" r="2.2" fill="#caa548" opacity="0.66"/><circle cx="102.8" cy="60.8" r="2.1" fill="#f3e09a" opacity="0.72"/><circle cx="115.0" cy="45.5" r="2.3" fill="#e9cf7c" opacity="0.69"/><circle cx="102.8" cy="33.3" r="2.3" fill="#fbefba" opacity="0.70"/><circle cx="122.3" cy="56.6" r="1.6" fill="#e9cf7c" opacity="0.66"/><circle cx="121.4" cy="55.1" r="1.7" fill="#dcbc60" opacity="0.86"/><circle cx="117.7" cy="19.3" r="1.8" fill="#d6b254" opacity="0.73"/><circle cx="124.4" cy="51.8" r="2.5" fill="#caa548" opacity="0.77"/><circle cx="84.9" cy="31.9" r="1.5" fill="#d6b254" opacity="0.80"/><circle cx="96.5" cy="18.1" r="2.1" fill="#f3e09a" opacity="0.80"/><circle cx="94.9" cy="9.6" r="1.6" fill="#dcbc60" opacity="0.72"/><circle cx="95.9" cy="7.8" r="1.5" fill="#e9cf7c" opacity="0.84"/><circle cx="89.1" cy="44.7" r="2.1" fill="#e3c56c" opacity="0.67"/><circle cx="109.8" cy="58.2" r="2.2" fill="#ecd488" opacity="0.64"/><circle cx="95.7" cy="11.8" r="1.5" fill="#f3e09a" opacity="0.89"/><circle cx="96.8" cy="38.2" r="1.6" fill="#f3e09a" opacity="0.88"/><circle cx="97.3" cy="39.1" r="1.8" fill="#fbefba" opacity="0.61"/><circle cx="99.3" cy="14.9" r="2.2" fill="#e3c56c" opacity="0.92"/><circle cx="111.4" cy="46.7" r="2.0" fill="#fbefba" opacity="0.82"/><circle cx="103.5" cy="0.9" r="1.9" fill="#f3e09a" opacity="0.72"/><circle cx="108.2" cy="42.7" r="1.7" fill="#f3e09a" opacity="0.80"/><circle cx="103.6" cy="16.8" r="2.0" fill="#fbefba" opacity="0.87"/><circle cx="94.9" cy="59.6" r="2.0" fill="#caa548" opacity="0.84"/><circle cx="126.2" cy="50.2" r="2.1" fill="#fbefba" opacity="0.80"/><circle cx="111.5" cy="8.9" r="2.4" fill="#d6b254" opacity="0.77"/><circle cx="106.9" cy="5.8" r="1.6" fill="#f3e09a" opacity="0.82"/><circle cx="102.2" cy="21.0" r="1.9" fill="#f3e09a" opacity="0.75"/><circle cx="100.6" cy="39.0" r="1.8" fill="#ecd488" opacity="0.92"/><circle cx="100.6" cy="30.1" r="2.4" fill="#d6b254" opacity="0.93"/><circle cx="106.5" cy="6.9" r="2.2" fill="#e9cf7c" opacity="0.72"/><circle cx="94.5" cy="19.3" r="2.3" fill="#e3c56c" opacity="0.66"/><circle cx="108.500" cy="31" r="1.600" fill="#e0763a"/></g><g filter="url(#b2h)"><path d="M86 55c5-3 10-2 13 2l8 18H84z" fill="#a8968c"/><path d="M76 66c2-1 4 0 5 2l2 8h-7z" fill="#a07868"/><path d="M77.200 42.500l9.500-1.500 7.500 35h-12.500z" fill="#17171c"/><path d="M80 46l5-.8.600 3-5 .8zM81 52l5-.8.600 3-5 .8zM82 58l5-.8.600 3-5 .8zM83 64l5-.8.600 3-5 .8z" fill="#3c3c44"/><path d="M84 54l6-2 2 3-7 3z" fill="#c4b0a6"/></g></svg></div>
<span class="t" id="t42" style="left:544.73px;top:292.80px;font-size:12.5px;line-height:18px;font-weight:bold;color:#333;letter-spacing:0.300px;">France</span>
<span class="t" id="t43" style="left:544.87px;top:309.60px;font-size:12.5px;line-height:18px;font-weight:bold;color:#333;letter-spacing:0.333px;">Christmas</span>
<span class="t" id="t44" style="left:545.20px;top:329.90px;font-size:10.5px;line-height:15px;font-weight:normal;color:#6e6e6e;letter-spacing:0.342px;">valeriial</span>
<div class="abs" style="left:606.5px;top:273px;width:67.0px;height:13px;border-radius:3px;background:rgba(14,14,14,0.7);z-index:2"></div>
<span class="t" id="t45" style="left:609.37px;top:272.60px;font-size:10px;line-height:14px;font-weight:normal;color:#fff;letter-spacing:0.430px;z-index:3;">68 questions</span>
<div class="card" style="left:684px"></div>
<svg class="abs" style="left:693.5px;top:182px;z-index:4" width="9" height="9" viewBox="0 0 9 9" fill="none" stroke="#6e6e6e" stroke-width="1.5" stroke-linejoin="round" stroke-linecap="round"><rect x=".6" y=".6" width="7.800" height="7.800" rx="1" stroke-width=".9"/><path d="M4.500.6v7.800M.6 4.500h7.800" stroke-width=".8"/><path d="M2.100 2.600h.9M6 2.600h.9M2.100 6.400h.9M6 6.400h.9" stroke-width=".8"/></svg>
<span class="t" id="t46" style="left:705.63px;top:178.90px;font-size:10.5px;line-height:15px;font-weight:normal;color:#6e6e6e;letter-spacing:0.220px;">Kahoot</span>
<div class="img" id="img2" style="left:684px"><svg width="139" height="92" viewBox="0 0 139 92" style="display:block" preserveAspectRatio="none"><defs><filter id="b3" x="-10%" y="-10%" width="120%" height="120%"><feGaussianBlur stdDeviation="2"/></filter><filter id="b3s" x="-10%" y="-10%" width="120%" height="120%"><feGaussianBlur stdDeviation="0.900"/></filter><filter id="b3h" x="-10%" y="-10%" width="120%" height="120%"><feGaussianBlur stdDeviation="0.500"/></filter></defs><rect width="139" height="92" fill="#19130f"/><g filter="url(#b3)"><ellipse cx="20" cy="64" rx="16" ry="11" fill="#5e3616"/><ellipse cx="8" cy="80" rx="10" ry="8" fill="#4a3018"/><ellipse cx="24" cy="10" rx="9" ry="4" fill="#4a3a3e"/><rect x="84" y="30" width="60" height="66" fill="#3b2a22"/><path d="M52 -4h84l-2 30c-10 12-30 14-48 10-16-3-30-8-36-16z" fill="#7f8fa6"/><ellipse cx="118" cy="10" rx="12" ry="13" fill="#9dabbd"/><ellipse cx="108" cy="21" rx="9" ry="6" fill="#c9908a"/><ellipse cx="88" cy="15" rx="3" ry="3" fill="#c08078"/><ellipse cx="122" cy="37" rx="10" ry="6" fill="#76849a"/></g><g filter="url(#b3s)"><ellipse cx="93" cy="33.500" rx="17" ry="7" fill="#c9ccd4"/><ellipse cx="96" cy="32" rx="6" ry="3" fill="#e0b040"/><ellipse cx="86" cy="40" rx="4" ry="2.500" fill="#6aa84a"/><ellipse cx="97" cy="48" rx="6" ry="6.500" fill="#c4c4c6"/><ellipse cx="95" cy="67" rx="15" ry="13" fill="#a9b0bc"/><ellipse cx="93" cy="68" rx="11" ry="9.500" fill="#d9801c"/><ellipse cx="88" cy="64" rx="5" ry="4" fill="#eec040"/><ellipse cx="96" cy="74" rx="5" ry="3" fill="#c84818"/><ellipse cx="88" cy="88" rx="8" ry="4" fill="#e8b030"/><ellipse cx="119.500" cy="56" rx="19.500" ry="10.200" fill="#e4e6ec"/><ellipse cx="120" cy="56" rx="12" ry="5.500" fill="#f0f0f4"/><path d="M125 71l14-10v21l-9-5z" fill="#e8344c"/></g><g filter="url(#b3h)"><path d="M34.500 36c2-2 5-1 6 2l5 22 30 6c3 6 3 12 0 18l-8 8H22l6-10c3-8 5-14 6-24z" fill="#ab8672"/><path d="M74 37c3-1 6 1 6 4l2 20c0 3-2 5-5 5z" fill="#a67f6b"/><path d="M16 92l6-8 12 3 2 5z" fill="#8a96a2"/><path d="M26 84c1-4 4-7 7-8l2 8z" fill="#d8d4d0"/></g><g transform="rotate(-9.500 60 44)"><rect x="44.500" y="14.500" width="29.500" height="60" rx="3.800" fill="#101014"/><rect x="46.200" y="16.500" width="26.100" height="56" rx="2.500" fill="#d2d2d4"/><text x="48.500" y="25.500" font-size="2.600" font-weight="bold" font-family="Liberation Sans,Arial,sans-serif" fill="#444">Give feedback</text><text x="48.500" y="30.500" font-size="1.700" font-family="Liberation Sans,Arial,sans-serif" fill="#777">Rate this</text><text x="48.500" y="35.500" font-size="4" font-family="DejaVu Sans,sans-serif" fill="#f0c030" letter-spacing="-.3">★★★★</text><text x="48.500" y="40.500" font-size="1.700" font-family="Liberation Sans,Arial,sans-serif" fill="#777">Did you learn something</text><rect x="49" y="60.500" width="21" height="3.200" rx=".8" fill="#8fd18f"/></g></svg></div>
<span class="t" id="t47" style="left:691.07px;top:292.80px;font-size:12.5px;line-height:18px;font-weight:bold;color:#333;letter-spacing:0.433px;">danish</span>
<span class="t" id="t48" style="left:691.20px;top:309.60px;font-size:12.5px;line-height:18px;font-weight:bold;color:#333;letter-spacing:0.278px;">vocabulary...</span>
<span class="t" id="t49" style="left:691.20px;top:329.90px;font-size:10.5px;line-height:15px;font-weight:normal;color:#6e6e6e;letter-spacing:0.342px;">valeriial</span>
<div class="abs" style="left:752.5px;top:273px;width:67.0px;height:13px;border-radius:3px;background:rgba(14,14,14,0.7);z-index:2"></div>
<span class="t" id="t50" style="left:755.37px;top:272.60px;font-size:10px;line-height:14px;font-weight:normal;color:#fff;letter-spacing:0.430px;z-index:3;">50 questions</span>
<div class="card" style="left:830px"></div>
<svg class="abs" style="left:839.5px;top:182px;z-index:4" width="9" height="9" viewBox="0 0 9 9" fill="none" stroke="#6e6e6e" stroke-width="1.5" stroke-linejoin="round" stroke-linecap="round"><rect x=".6" y=".6" width="7.800" height="7.800" rx="1" stroke-width=".9"/><path d="M4.500.6v7.800M.6 4.500h7.800" stroke-width=".8"/><path d="M2.100 2.600h.9M6 2.600h.9M2.100 6.400h.9M6 6.400h.9" stroke-width=".8"/></svg>
<span class="t" id="t51" style="left:851.63px;top:178.90px;font-size:10.5px;line-height:15px;font-weight:normal;color:#6e6e6e;letter-spacing:0.220px;">Kahoot</span>
<div class="img" id="img3" style="left:830px"><svg width="139" height="92" viewBox="0 0 139 92" style="display:block" preserveAspectRatio="none"><defs></defs><rect width="139" height="92" fill="#6d6d6d"/><circle cx="9.500" cy="9" r="36.500" fill="#5f5f5f"/><path d="M121.500 39.500L146 78 139 92H95z" fill="#626262"/><text x="40.300" y="53.500" font-size="18.500" font-weight="bold" font-family="Liberation Sans,Arial,sans-serif" fill="#b4b4b4" stroke="#b4b4b4" stroke-width=".9" textLength="50" lengthAdjust="spacingAndGlyphs">Kahoot</text><text x="91" y="53.500" font-size="21" font-weight="bold" font-family="Liberation Sans,Arial,sans-serif" fill="#b4b4b4" transform="rotate(6 93 46)">!</text></svg></div>
<span class="t" id="t52" style="left:837.07px;top:292.80px;font-size:12.5px;line-height:18px;font-weight:bold;color:#333;letter-spacing:0.350px;">super quick</span>
<span class="t" id="t53" style="left:837.20px;top:329.90px;font-size:10.5px;line-height:15px;font-weight:normal;color:#6e6e6e;letter-spacing:0.342px;">valeriial</span>
<div class="abs" style="left:904px;top:273px;width:61.5px;height:13px;border-radius:3px;background:rgba(14,14,14,0.7);z-index:2"></div>
<span class="t" id="t54" style="left:906.87px;top:272.60px;font-size:10px;line-height:14px;font-weight:normal;color:#fff;letter-spacing:0.490px;z-index:3;">9 questions</span>
<div class="abs" style="left:511px;top:179.700px;width:13px;height:13px;border:1px solid #a8a8a8;border-radius:3px;background:#fdfdfd;z-index:3"></div>
<div class="abs" style="left:399px;top:214.300px;width:125.500px;height:27px;border-radius:3px;background:#1263d0;z-index:2"></div>
<span class="t" id="t55" style="left:437.63px;top:219.00px;font-size:11.5px;line-height:16px;font-weight:bold;color:#fff;letter-spacing:-0.125px;z-index:3;">Host live</span>
<span class="t" id="t56" style="left:443.17px;top:250.30px;font-size:11.5px;line-height:16px;font-weight:bold;color:#fff;letter-spacing:-0.367px;z-index:3;">Assign</span>
<svg class="abs" style="left:509.800px;top:297.800px;z-index:3" width="5" height="14" viewBox="0 0 5 14" fill="#1e1e1e"><circle cx="2.500" cy="2" r="1.450"/><circle cx="2.500" cy="7.100" r="1.450"/><circle cx="2.500" cy="12.200" r="1.450"/></svg>
<svg class="abs" style="left:494.300px;top:313.300px;z-index:9" width="12" height="13" viewBox="0 0 12 13"><path d="M2 1.200C2.600.500 3.600.800 3.900 1.600L5.400 5.200 9.600 5.600C10.600 5.800 11.200 6.600 11 7.600L10.400 10.400C10.100 11.600 9.100 12.400 7.900 12.400H5.600C4.700 12.400 3.900 12 3.400 11.300L.900 7.900C.500 7.300.700 6.600 1.300 6.300 1.800 6.100 2.400 6.200 2.800 6.600L3.200 7 1.600 2.400C1.400 1.900 1.600 1.500 2 1.200Z" fill="#3c0f96" stroke="#fbfbfb" stroke-width=".5"/><path d="M5.700 7.600V10.800M7.300 7.600V10.800M8.900 7.600V10.800" stroke="#f4f0fa" stroke-width=".8" fill="none"/></svg>
</main>
<footer>
<div class="abs" style="left:0;top:655px;width:425px;height:15px;background:#705f96;border-radius:0 4px 0 0;z-index:10"></div>
<span class="t" id="t57" style="left:2.67px;top:655.30px;font-size:11.5px;line-height:16px;font-weight:normal;color:#fff;letter-spacing:-0.070px;z-index:11;">create.kahoot.it/details/.../c4b6583d-9366-4453-9e88-164968aec406</span>
<div class="abs" style="left:0;top:0;width:1280px;height:670px;z-index:20;pointer-events:none;box-shadow:inset 1px 1px 0 rgba(0,0,0,.06),inset -1px 0 0 rgba(0,0,0,.05)"></div>
</footer>
</body>
</html>
